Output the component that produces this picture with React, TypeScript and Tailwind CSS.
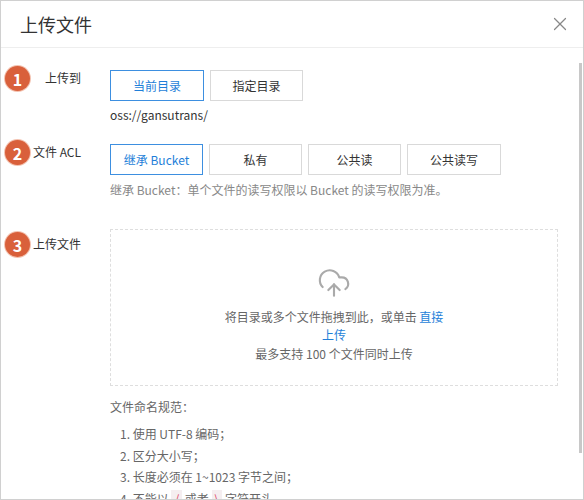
import { X, CloudUpload } from 'lucide-react'

const font = { fontFamily: '"Noto Sans CJK SC", "Liberation Sans", sans-serif' }

function Step({ n }: { n: number }) {
  return (
    <span className="flex h-[25px] w-[25px] items-center justify-center rounded-full bg-[#d9603b] text-[16px] font-bold text-white shadow-[0_0_0_1px_#f3c2b0]">
      {n}
    </span>
  )
}

function Btn({ active, children, w }: { active?: boolean; children: React.ReactNode; w: string }) {
  return (
    <div
      className={`flex h-[31px] items-center justify-center border text-[12px] ${w} ${
        active ? 'border-[#3d8fe0] text-[#1f7fd9]' : 'border-[#d9d9d9] text-[#333]'
      }`}
    >
      {children}
    </div>
  )
}

function Row({ n, label, children, top }: { n: number; label: string; children: React.ReactNode; top: string }) {
  return (
    <div className="flex">
      <div className={`flex w-[109px] shrink-0 items-start justify-between pl-[4px] pr-[29px] ${top}`}>
        <Step n={n} />
        <span className="mt-[3px] text-[12px] text-[#333]">{label}</span>
      </div>
      <div className="flex-1">{children}</div>
    </div>
  )
}

export default function App() {
  return (
    <div style={font} className="relative h-[500px] w-[584px] overflow-hidden border border-[#d0d0d0] bg-white">
      <div className="flex h-[47px] items-center justify-between border-b border-[#eeeeee] pl-[19px] pr-[12px]">
        <h1 className="text-[18px] text-[#333]">上传文件</h1>
        <X className="h-[22px] w-[22px] text-[#888]" strokeWidth={1.3} />
      </div>
      <div className="absolute right-[1px] top-[62px] h-[390px] w-[3px] bg-[#c8c8c8]" />
      <div className="pr-[26px] pt-[22px]">
        <Row n={1} label="上传到" top="-mt-[4px]">
          <div className="flex gap-[6px]">
            <Btn active w="w-[94px]">当前目录</Btn>
            <Btn w="w-[93px]">指定目录</Btn>
          </div>
          <p className="mt-[5px] text-[12px] text-[#333]">oss://gansutrans/</p>
        </Row>
        <div className="mt-[20px]">
          <Row n={2} label="文件 ACL" top="-mt-[4px]">
            <div className="flex gap-[6px]">
              <Btn active w="w-[93px]">继承 Bucket</Btn>
              <Btn w="w-[93px]">私有</Btn>
              <Btn w="w-[93px]">公共读</Btn>
              <Btn w="w-[94px]">公共读写</Btn>
            </div>
            <p className="mt-[6px] text-[12px] text-[#888]">继承 Bucket：单个文件的读写权限以 Bucket 的读写权限为准。</p>
          </Row>
        </div>
        <div className="mt-[30px]">
          <Row n={3} label="上传文件" top="mt-[3px]">
            <div className="flex h-[157px] w-[448px] flex-col items-center justify-center border border-dashed border-[#dedede] pt-[14px] text-[12px] text-[#666]">
              <CloudUpload className="h-[34px] w-[34px] text-[#aaa]" strokeWidth={1.5} />
              <p className="mt-[8px] w-[222px] break-all text-center leading-[18px]">
                将目录或多个文件拖拽到此，或单击 <span className="text-[#1f7fd9]">直接上传</span>
              </p>
              <p className="leading-[20px]">最多支持 100 个文件同时上传</p>
            </div>
            <div className="mt-[12px] text-[12px] text-[#666]">
              <p>文件命名规范：</p>
              <ol className="mt-[7px] pl-[10px] leading-[21.5px]">
                <li>1. 使用 UTF-8 编码；</li>
                <li>2. 区分大小写；</li>
                <li>3. 长度必须在 1~1023 字节之间；</li>
                <li>
                  4. 不能以 <span className="bg-[#f5eef0] px-[3px] text-[#e04a6a]">/</span> 或者{' '}
                  <span className="bg-[#f5eef0] px-[3px] text-[#e04a6a]">\</span> 字符开头。
                </li>
              </ol>
            </div>
          </Row>
        </div>
      </div>
    </div>
  )
}
